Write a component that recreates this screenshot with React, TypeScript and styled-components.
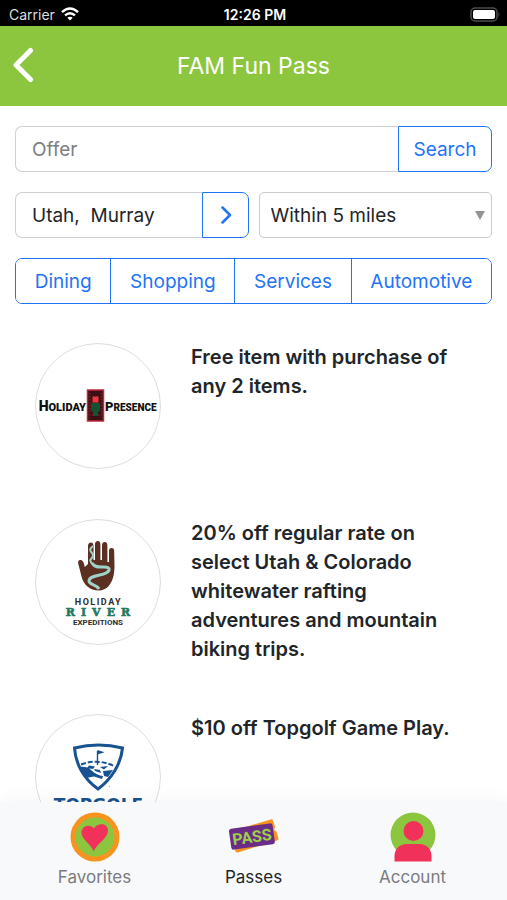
import React, { useState } from "react";
import styled, { createGlobalStyle } from "styled-components";

const BLUE = "#1f74f6";
const GREEN = "#8cc63f";
const PINK = "#f0325a";
const ORANGE = "#f7931e";

const GlobalStyle = createGlobalStyle`
  *, *::before, *::after { box-sizing: border-box; }
  body { margin: 0; background: #fff; }
  body, button, input, select { font-family: Inter, Roboto, sans-serif; }
`;

const Screen = styled.div`
  display: flex;
  flex-direction: column;
  height: 100vh;
  overflow: hidden;
  color: #212529;
  background: #fff;
`;

const StatusBar = styled.div`
  display: grid;
  grid-template-columns: 1fr auto 1fr;
  align-items: center;
  flex: none;
  height: 26px;
  padding: 2px 6px 0 9px;
  background: #000;
  color: #fff;
  font-size: 14px;
`;

const Carrier = styled.div`
  display: flex;
  align-items: center;
  gap: 6px;
  color: #ddd;
`;

const Clock = styled.div`
  font-weight: 600;
`;

const BatterySlot = styled.div`
  display: flex;
  justify-content: flex-end;
`;

const Header = styled.header`
  display: grid;
  grid-template-columns: 48px 1fr 48px;
  align-items: center;
  flex: none;
  height: 80px;
  background: ${GREEN};
  color: #fff;
`;

const BackButton = styled.button`
  display: flex;
  align-items: center;
  height: 48px;
  padding: 0 0 3px 11px;
  border: 0;
  background: none;
`;

const Title = styled.h1`
  margin: 0;
  font-size: 23px;
  font-weight: 400;
  text-align: center;
`;

const Content = styled.main`
  flex: 1;
  min-height: 0;
  overflow-y: auto;
  scrollbar-width: none;
  padding-top: 20px;
`;

const Filters = styled.form`
  display: grid;
  gap: 20px;
  padding: 0 15px;
`;

const Pair = styled.div`
  display: grid;
  grid-template-columns: 1fr 1fr;
  gap: 10px;
`;

const InputGroup = styled.div`
  display: flex;
  min-width: 0;
  height: 46px;
`;

const TextBox = styled.input`
  flex: 1;
  min-width: 0;
  padding: 0 16px;
  border: 1px solid #ced0d4;
  border-right: 0;
  border-radius: 7px 0 0 7px;
  background: #fff;
  color: #212529;
  font-size: 19px;
  outline: 0;
  &::placeholder { color: #7b7f83; opacity: 1; }
`;

const GroupButton = styled.button<{ $compact?: boolean }>`
  display: flex;
  align-items: center;
  justify-content: center;
  width: ${(p) => (p.$compact ? "47px" : "94px")};
  padding: 0;
  border: 1px solid ${BLUE};
  border-radius: 0 7px 7px 0;
  background: #fff;
  color: ${BLUE};
  font-size: 19px;
`;

const SelectWrap = styled.div`
  display: grid;
  align-items: center;
  height: 46px;
  & > * { grid-area: 1 / 1; }
  & > svg { justify-self: end; margin-right: 7px; pointer-events: none; }
`;

const Select = styled.select`
  width: 100%;
  height: 46px;
  padding: 0 28px 0 11px;
  border: 1px solid #c9cbce;
  border-radius: 5px;
  background: #fff;
  color: #212529;
  font-size: 19px;
  appearance: none;
`;

const Categories = styled.div`
  display: flex;
  height: 46px;
  border: 1px solid ${BLUE};
  border-radius: 7px;
  overflow: hidden;
`;

const Category = styled.button`
  flex: 1 1 auto;
  padding: 0;
  border: 0;
  background: #fff;
  color: ${BLUE};
  font-size: 19px;
  & + & { border-left: 1px solid ${BLUE}; }
`;

const Offers = styled.ul`
  display: grid;
  gap: 50px;
  margin: 0;
  padding: 39px 40px 40px 35px;
  list-style: none;
`;

const Offer = styled.li`
  display: grid;
  grid-template-columns: 126px 1fr;
  align-items: start;
  gap: 30px;
`;

const Logo = styled.div`
  width: 126px;
  height: 126px;
  border: 1px solid #dedede;
  border-radius: 50%;
  overflow: hidden;
  & > svg { display: block; }
`;

const OfferText = styled.p`
  margin: 0;
  max-width: 264px;
  font-size: 20px;
  font-weight: 600;
  line-height: 29px;
`;

const TabBar = styled.nav`
  display: flex;
  flex: none;
  height: 98px;
  padding: 10px 15px 0;
  background: #f8f9fb;
  box-shadow: 0 0 20px rgba(0, 0, 0, 0.05);
`;

const Tab = styled.a<{ $active?: boolean }>`
  display: flex;
  flex: 1;
  flex-direction: column;
  align-items: center;
  gap: 4px;
  color: ${(p) => (p.$active ? "#212529" : "#7b7c7e")};
  font-size: 17px;
  line-height: 22px;
  text-decoration: none;
`;

const HolidayPresence = () => (
  <svg width="124" height="124" viewBox="36 344 124 124" role="img" aria-label="Holiday Presence">
    <g fontFamily="Roboto, sans-serif" fontWeight="900" fill="#111">
      <text x="86" y="411" textAnchor="end" fontSize="14">H<tspan fontSize="11">OLIDAY</tspan></text>
      <text x="105" y="411" fontSize="13">P<tspan fontSize="10">RESENCE</tspan></text>
    </g>
    <rect x="87.500" y="390" width="16" height="31" fill="#3a1014" stroke="#c3283a" strokeWidth="1.500" />
    <path d="M90 393v25M101.500 393v25M92 415h8" stroke="#7c1c28" strokeWidth="1.500" strokeDasharray="1.500 1.500" />
    <path d="M92.500 396.500h6v6h-6z" fill="#f2363c" />
    <path d="M91 403h9v8l-2 1v4h-5v-4l-2-1z" fill="#14512f" />
  </svg>
);

const HolidayRiver = () => (
  <svg width="124" height="124" viewBox="36 520 124 124" role="img" aria-label="Holiday River Expeditions">
    <path
      d="M88 564V546q0-3 2.500-3.500t3 3V560h1.500v-15.500q0-3.500 2.700-3.500t2.700 3.500V560h1.600v-14.500q0-3.500 2.700-3.500t2.700 3.500V562h1.600v-11q0-3 2.600-3t2.600 3c0 10 1 17-.5 24-1.800 9-7 15.500-14.700 15.500-9.500 0-15.500-6-17.500-14l-3.300-13q-.6-3 1.600-3.500c2.700-.5 4 2 5 7z"
      fill="#5b3022"
    />
    <path d="M93 546c-4 3-3 5-1 7s1 4-1 6 1 5 4 7" fill="none" stroke="#9fd2c8" strokeWidth="2" />
    <path
      d="M92 563c3 5 8 4 12 4 6 0 7 3 2 6s-17 2-17 8c0 4 7 3 10 8"
      fill="none"
      stroke="#9fd2c8"
      strokeWidth="3"
    />
    <text x="98.500" y="604.500" textAnchor="middle" fontFamily="Roboto, sans-serif" fontWeight="700" fontSize="9" letterSpacing="1.500" fill="#2d2d2d">HOLIDAY</text>
    <text x="101" y="615.500" textAnchor="middle" fontFamily="'DejaVu Serif', serif" fontWeight="700" fontSize="11" letterSpacing="6" fill="#237a63" stroke="#237a63" strokeWidth="0.600">RIVER</text>
    <text x="98" y="624.500" textAnchor="middle" fontFamily="Roboto, sans-serif" fontWeight="700" fontSize="8" fill="#2d2d2d">EXPEDITIONS</text>
  </svg>
);

const Topgolf = () => (
  <svg width="124" height="124" viewBox="36 715 124 124" role="img" aria-label="Topgolf">
    <path d="M74.500 748q24-6 48 0c-1.500 16-11 31-24.500 41-14-10-22.500-25-23.500-41z" fill="#fff" stroke="#195291" strokeWidth="3" />
    <path d="M97.500 765V751" stroke="#195291" strokeWidth="1.400" />
    <path d="M97.500 750l7 2.200-7 2.200z" fill="#195291" />
    <path d="M81 764.500q17-6.500 34 2" fill="none" stroke="#195291" strokeWidth="2" strokeDasharray="5 2" />
    <path d="M79 767q8-1 12 3c4 4 8 5.500 12 6l-1 3-8-2.500-8 1.500zM103 771l10-1-5 7-4-1zM89 765.500l6 1-2 2.500-6-1zM100 767l8-1-4 3.500zM94 769l6 1 1 3-6-2z" fill="#195291" />
    <circle cx="109.500" cy="786.500" r="0.700" fill="#9aa7b5" />
    <text x="98.500" y="811" textAnchor="middle" fontFamily="'DejaVu Sans', sans-serif" fontWeight="700" fontSize="17" fill="#195291">TOPGOLF</text>
  </svg>
);

const WifiIcon = () => (
  <svg width="18" height="14" viewBox="0 0 18 14" fill="none" stroke="#fff" strokeWidth="2.400" aria-hidden="true">
    <path d="M1 5.200q8-7.200 16 0M4 8.400q5-4.400 10 0" />
    <path d="M9 13.500L6.300 10.800q2.700-2.200 5.400 0z" fill="#fff" stroke="none" />
  </svg>
);

const BatteryIcon = () => (
  <svg width="31" height="15" viewBox="0 0 31 15" aria-hidden="true">
    <rect x="1" y="1" width="26" height="13" rx="4" fill="none" stroke="#4b4b4b" strokeWidth="1.500" />
    <rect x="3" y="3" width="22" height="9" rx="2" fill="#fff" />
    <path d="M28.500 5q2 2.500 0 5z" fill="#4b4b4b" />
  </svg>
);

const FavoritesIcon = () => (
  <svg width="50" height="50" viewBox="0 0 50 50" aria-hidden="true">
    <circle cx="25" cy="25" r="24.500" fill={ORANGE} />
    <circle cx="25" cy="25" r="19.500" fill={GREEN} />
    <path d="M23.500 39.500C21.500 32 11.500 28 11.500 20.500c0-7 9-9 12.500-4 3.500-6 13.500-5.500 14 1.500.3 8.500-10 12-14.500 21.500z" fill={PINK} />
  </svg>
);

const PassIcon = () => (
  <svg width="50" height="50" viewBox="0 0 50 50" aria-hidden="true">
    <g transform="rotate(-17 25 25)">
      <rect x="3" y="13" width="45" height="22" rx="2" fill={ORANGE} />
      <circle cx="48.500" cy="24" r="2" fill="#f8f9fb" />
    </g>
    <g transform="rotate(-8 23 25)">
      <rect x="1" y="14" width="44" height="21" rx="2.500" fill="#6a2c86" />
      <text x="23" y="30.500" textAnchor="middle" fontFamily="Roboto, sans-serif" fontWeight="700" fontSize="16" fill="#9bd04a">PASS</text>
    </g>
  </svg>
);

const AccountIcon = () => (
  <svg width="50" height="50" viewBox="0 0 50 50" aria-hidden="true">
    <circle cx="25" cy="23" r="22.500" fill={GREEN} />
    <path d="M6.500 49.500V44c0-7 5-12 12-12h13c7 0 12 5 12 12v5.500z" fill={PINK} />
    <circle cx="25.500" cy="19" r="11" fill={GREEN} />
    <circle cx="25.500" cy="19" r="10" fill={PINK} />
  </svg>
);

const CATEGORIES = ["Dining", "Shopping", "Services", "Automotive"];

const OFFERS = [
  { logo: <HolidayPresence />, text: "Free item with purchase of any 2 items." },
  {
    logo: <HolidayRiver />,
    text: "20% off regular rate on select Utah & Colorado whitewater rafting adventures and mountain biking trips.",
  },
  { logo: <Topgolf />, text: "$10 off Topgolf Game Play." },
];

const TABS = [
  { label: "Favorites", icon: <FavoritesIcon /> },
  { label: "Passes", icon: <PassIcon />, active: true },
  { label: "Account", icon: <AccountIcon /> },
];

export default function App() {
  const [place, setPlace] = useState("Utah,  Murray");
  return (
    <Screen>
      <GlobalStyle />
      <StatusBar>
        <Carrier>Carrier <WifiIcon /></Carrier>
        <Clock>12:26 PM</Clock>
        <BatterySlot><BatteryIcon /></BatterySlot>
      </StatusBar>
      <Header>
        <BackButton type="button" aria-label="Back">
          <svg width="24" height="36" viewBox="0 0 24 36" fill="none" stroke="#fff" strokeWidth="5" strokeLinecap="round" strokeLinejoin="round">
            <path d="M19.500 3.500L5 18l14.500 14.500" />
          </svg>
        </BackButton>
        <Title>FAM Fun Pass</Title>
      </Header>
      <Content>
        <Filters onSubmit={(e) => e.preventDefault()}>
          <InputGroup>
            <TextBox aria-label="Offer" placeholder="Offer" />
            <GroupButton type="submit">Search</GroupButton>
          </InputGroup>
          <Pair>
            <InputGroup>
              <TextBox aria-label="Location" value={place} onChange={(e) => setPlace(e.target.value)} />
              <GroupButton type="button" aria-label="Change location" $compact>
                <svg width="14" height="18" viewBox="0 0 14 18" fill="none" stroke="currentColor" strokeWidth="2.500" strokeLinecap="round" strokeLinejoin="round">
                  <path d="M4.500 1.500L12 9l-7.500 7.500" />
                </svg>
              </GroupButton>
            </InputGroup>
            <SelectWrap>
              <Select aria-label="Distance">
                <option>Within 5 miles</option>
              </Select>
              <svg width="10" height="9" viewBox="0 0 10 9" aria-hidden="true">
                <path d="M0 0h10L5 9z" fill="#939393" />
              </svg>
            </SelectWrap>
          </Pair>
          <Categories>
            {CATEGORIES.map((name) => (
              <Category key={name} type="button">{name}</Category>
            ))}
          </Categories>
        </Filters>
        <Offers>
          {OFFERS.map((offer) => (
            <Offer key={offer.text}>
              <Logo>{offer.logo}</Logo>
              <OfferText>{offer.text}</OfferText>
            </Offer>
          ))}
        </Offers>
      </Content>
      <TabBar>
        {TABS.map((tab) => (
          <Tab key={tab.label} href="#" $active={tab.active} aria-current={tab.active ? "page" : undefined}>
            {tab.icon}
            {tab.label}
          </Tab>
        ))}
      </TabBar>
    </Screen>
  );
}
